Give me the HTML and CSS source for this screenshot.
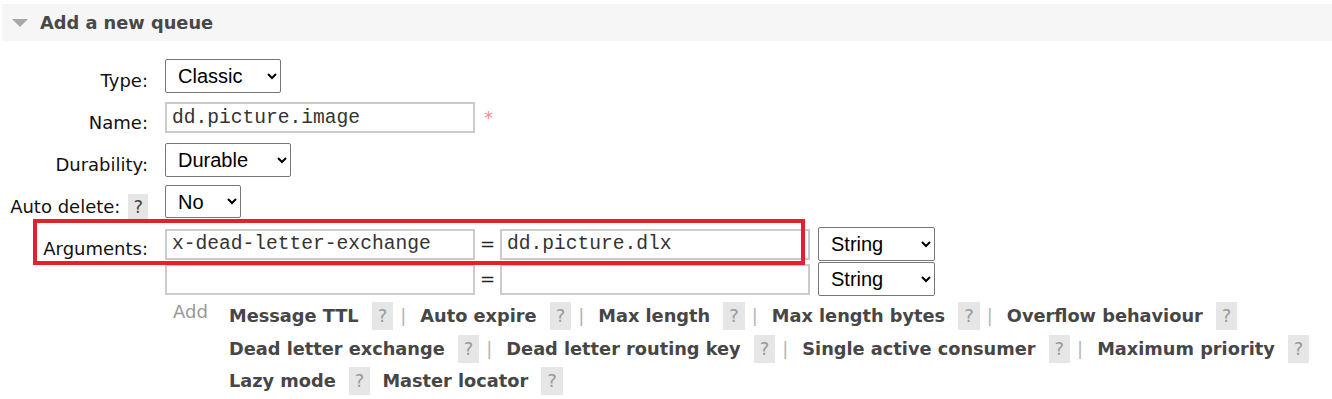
FILE: index.html
```html
<!DOCTYPE html>
<html lang="en">
<head>
<meta charset="utf-8">
<title>Add a new queue</title>
<link rel="stylesheet" href="styles.css">
</head>
<body>
<div class="section">
  <div class="section-head">
    <svg class="tri" width="16" height="8" viewBox="0 0 16 8"><polygon points="0,0 16,0 8,8" fill="#a8a8a8"/></svg>
    <span class="section-title">Add a new queue</span>
  </div>
  <form class="queue-form">
    <div class="row row-type">
      <label class="lbl">Type:</label>
      <div class="ctl"><select class="sel sel-type"><option>Classic</option><option>Quorum</option></select></div>
    </div>
    <div class="row row-name">
      <label class="lbl">Name:</label>
      <div class="ctl"><input class="inp" type="text" value="dd.picture.image"><span class="req">*</span></div>
    </div>
    <div class="row row-dur">
      <label class="lbl">Durability:</label>
      <div class="ctl"><select class="sel sel-dur"><option>Durable</option><option>Transient</option></select></div>
    </div>
    <div class="row row-ad">
      <label class="lbl">Auto delete:<span class="help help-sm">?</span></label>
      <div class="ctl"><select class="sel sel-ad"><option>No</option><option>Yes</option></select></div>
    </div>
    <div class="row row-args">
      <label class="lbl lbl-args">Arguments:</label>
      <div class="args">
        <div class="arg-line">
          <input class="inp" type="text" value="x-dead-letter-exchange"><span class="eq">=</span><input class="inp" type="text" value="dd.picture.dlx"><select class="sel sel-str"><option>String</option><option>Number</option><option>Boolean</option><option>List</option></select>
        </div>
        <div class="arg-line">
          <input class="inp" type="text" value=""><span class="eq">=</span><input class="inp" type="text" value=""><select class="sel sel-str"><option>String</option><option>Number</option><option>Boolean</option><option>List</option></select>
        </div>
        <div class="arg-add">
          <span class="add-lbl">Add</span>
          <div class="arg-links">
            <div class="link-line">
              <span class="ql">Message TTL</span><span class="help">?</span><span class="sep">|</span>
              <span class="ql">Auto expire</span><span class="help">?</span><span class="sep">|</span>
              <span class="ql">Max length</span><span class="help">?</span><span class="sep">|</span>
              <span class="ql">Max length bytes</span><span class="help">?</span><span class="sep">|</span>
              <span class="ql">Overflow behaviour</span><span class="help">?</span>
            </div>
            <div class="link-line">
              <span class="ql">Dead letter exchange</span><span class="help">?</span><span class="sep">|</span>
              <span class="ql">Dead letter routing key</span><span class="help">?</span><span class="sep">|</span>
              <span class="ql">Single active consumer</span><span class="help">?</span><span class="sep">|</span>
              <span class="ql">Maximum priority</span><span class="help">?</span>
            </div>
            <div class="link-line">
              <span class="ql">Lazy mode</span><span class="help">?</span>
              <span class="ql ql-next">Master locator</span><span class="help">?</span>
            </div>
          </div>
        </div>
      </div>
      <div class="highlight"></div>
    </div>
  </form>
</div>
</body>
</html>
```
FILE: styles.css
```css
html, body {
  margin: 0;
  padding: 0;
  background: #fff;
}

body {
  font-family: "DejaVu Sans", Verdana, sans-serif;
  font-size: 18px;
  color: #111;
}

.section-head {
  margin: 4px 0 0 2px;
  height: 37px;
  background: #f6f6f6;
  display: flex;
  align-items: center;
  padding-left: 10px;
}

.tri {
  display: block;
  margin-right: 12px;
}

.section-title {
  font-weight: bold;
  font-size: 17.8px;
  color: #484848;
}

.queue-form {
  margin: 18px 0 0 0;
}

.row {
  display: grid;
  grid-template-columns: 148px 1fr;
  column-gap: 17px;
  align-items: center;
}

.lbl {
  text-align: right;
  line-height: 22px;
  padding-top: 10px;
  white-space: nowrap;
  color: #111;
}

.ctl {
  display: flex;
  align-items: center;
}

.row-type { grid-template-rows: 34px; margin-bottom: 9px; }
.row-name { grid-template-rows: 31px; margin-bottom: 10px; }
.row-dur { grid-template-rows: 34px; margin-bottom: 8px; }
.row-ad { grid-template-rows: 33px; margin-bottom: 9px; }

.row-args {
  align-items: start;
  position: relative;
}

.lbl-args {
  padding-top: 11px;
}

.sel {
  height: 34px;
  font-family: "Liberation Sans", Arial, sans-serif;
  font-size: 20px;
  color: #000;
  background: #fff;
  border: 1px solid #767676;
  border-radius: 2px;
  padding: 0 0 0 8px;
  margin: 0;
  box-sizing: border-box;
}

.sel-type { width: 116px; }
.sel-dur { width: 126px; }
.sel-ad { width: 76px; height: 33px; }
.sel-str { width: 117px; margin-left: 8px; }

.inp {
  width: 310px;
  height: 31px;
  box-sizing: border-box;
  border: 2px solid #cbcbcb;
  padding: 0 5px;
  margin: 0;
  font-family: "Liberation Mono", "Courier New", monospace;
  font-size: 19.6px;
  color: #333;
  background: #fff;
  outline: none;
}

.req {
  margin-left: 9px;
  color: #f28c8c;
  line-height: 22px;
}

.help {
  display: inline-block;
  background: #e6e6e6;
  color: #9a9a9a;
  font-weight: normal;
  font-size: 18px;
  line-height: 28px;
  padding: 0 6px;
}

.help-sm {
  line-height: 25px;
  padding: 0 5px;
  margin-left: 8px;
  color: #444;
  vertical-align: baseline;
}

.args {
  display: flex;
  flex-direction: column;
}

.arg-line {
  display: flex;
  align-items: center;
  height: 34px;
  margin-bottom: 1px;
}

.eq {
  width: 25px;
  text-align: center;
  color: #222;
  line-height: 22px;
}

.arg-add {
  display: flex;
  align-items: flex-start;
  padding-top: 3px;
}

.add-lbl {
  color: #999;
  line-height: 24px;
  padding-left: 8px;
  width: 35px;
}

.arg-links {
  margin-left: 21px;
  display: flex;
  flex-direction: column;
}

.link-line {
  display: flex;
  align-items: baseline;
  height: 32.5px;
  line-height: 32.5px;
  white-space: nowrap;
}

.ql {
  font-weight: bold;
  font-size: 17.75px;
  color: #464646;
  margin-right: 13px;
}

.ql-next {
  margin-left: 12px;
}

.sep {
  color: #b5b5b5;
  margin: 0 14px 0 7px;
}

.highlight {
  position: absolute;
  left: 33px;
  top: -8px;
  width: 772px;
  height: 46px;
  box-sizing: border-box;
  border: 4px solid #e3202b;
  pointer-events: none;
}
```
